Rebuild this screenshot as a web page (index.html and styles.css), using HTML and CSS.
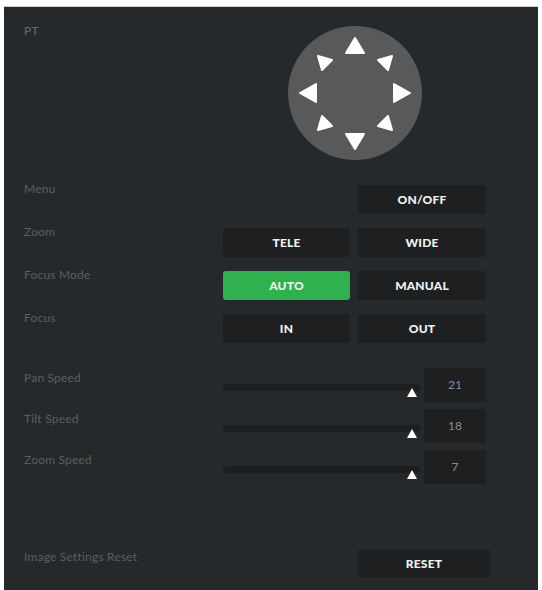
FILE: index.html
```html
<!DOCTYPE html>
<html lang="en">
<head>
    <meta charset="UTF-8">
    <meta name="viewport" content="width=device-width, initial-scale=1.0">
    <title>Camera Control</title>
    <link rel="stylesheet" href="styles.css">
</head>
<body>
    <div class="panel">
        <div class="row row-pt">
            <span class="label">PT</span>
            <div class="pad">
                <svg width="134" height="134" viewBox="0 0 134 134">
                    <circle cx="67" cy="67" r="67" fill="#58595b"/>
                    <g fill="#fff" stroke="#fff" stroke-width="2" stroke-linejoin="round">
                        <!-- up / down / left / right -->
                        <polygon points="67,12 58,27 76,27"/>
                        <polygon points="67,123 58,108 76,108"/>
                        <polygon points="12,67 28,58 28,76"/>
                        <polygon points="122,67 106,58 106,76"/>
                        <!-- diagonals -->
                        <polygon points="30,30 44,34 34,44"/>
                        <polygon points="104,30 90,34 100,44"/>
                        <polygon points="30,104 34,90 44,100"/>
                        <polygon points="104,104 100,90 90,100"/>
                    </g>
                </svg>
            </div>
        </div>

        <div class="row row-btn first-btn">
            <span class="label">Menu</span>
            <button class="btn col-right">ON/OFF</button>
        </div>
        <div class="row row-btn">
            <span class="label">Zoom</span>
            <button class="btn">TELE</button>
            <button class="btn">WIDE</button>
        </div>
        <div class="row row-btn">
            <span class="label">Focus Mode</span>
            <button class="btn active">AUTO</button>
            <button class="btn">MANUAL</button>
        </div>
        <div class="row row-btn">
            <span class="label">Focus</span>
            <button class="btn">IN</button>
            <button class="btn">OUT</button>
        </div>

        <div class="row row-slider first-slider">
            <span class="label">Pan Speed</span>
            <div class="slider"><div class="track"></div><span class="thumb"></span></div>
            <div class="value">21</div>
        </div>
        <div class="row row-slider">
            <span class="label">Tilt Speed</span>
            <div class="slider"><div class="track"></div><span class="thumb"></span></div>
            <div class="value">18</div>
        </div>
        <div class="row row-slider">
            <span class="label">Zoom Speed</span>
            <div class="slider"><div class="track"></div><span class="thumb"></span></div>
            <div class="value">7</div>
        </div>

        <div class="row row-reset">
            <span class="label">Image Settings Reset</span>
            <button class="btn col-right">RESET</button>
        </div>
    </div>
</body>
</html>
```

FILE: styles.css
```css
body {
    margin: 0;
    background-color: #fff;
    font-family: Lato, "Open Sans", sans-serif;
}
.panel {
    margin: 6px 4px 0;
    height: 584px;
    box-sizing: border-box;
    padding: 19px 0 0 20px;
    background-color: #26292c;
    border-top: 1px solid #c9cacb;
    display: flex;
    flex-direction: column;
}
.row {
    display: grid;
    grid-template-columns: 191px 127px 128px;
    column-gap: 8px;
    align-items: start;
}
.label {
    font-size: 12px;
    line-height: 14px;
    color: #5a5e61;
    letter-spacing: 0.2px;
}
.row-pt .label {
    margin-top: -2px;
    color: #686b6e;
}
.pad {
    grid-column: 2 / 4;
    justify-self: center;
    height: 134px;
}
.pad svg {
    display: block;
}

/* buttons */
.btn {
    height: 29px;
    padding: 0;
    border: none;
    border-radius: 3px;
    background-color: #1d1f21;
    color: #f2f2f2;
    font-family: Lato, "Open Sans", sans-serif;
    font-size: 12px;
    font-weight: 900;
    letter-spacing: 0.2px;
    cursor: pointer;
}
.btn.active {
    background-color: #2fb24e;
}
.col-right {
    grid-column: 3;
}
.row-btn {
    margin-top: 14px;
}
.row-btn.first-btn {
    margin-top: 25px;
}
.row-btn .label {
    margin-top: -3px;
}

/* speed sliders */
.row-slider {
    grid-template-columns: 195px 197px 62px;
    column-gap: 4px;
    margin-top: 7px;
}
.row-slider.first-slider {
    margin-top: 25px;
}
.row-slider .label {
    margin-top: 3px;
}
.slider {
    position: relative;
    height: 34px;
}
.track {
    margin-top: 16px;
    height: 7px;
    border-radius: 3px;
    background-color: #1c1e20;
}
.thumb {
    position: absolute;
    right: 3px;
    top: 20px;
    width: 0;
    height: 0;
    border-left: 5.5px solid transparent;
    border-right: 5.5px solid transparent;
    border-bottom: 9px solid #fff;
}
.value {
    height: 34px;
    line-height: 34px;
    text-align: center;
    background-color: #1d1f21;
    color: #8a8d90;
    font-size: 12px;
}

/* reset */
.row-reset {
    grid-template-columns: 191px 127px 132px;
    margin-top: 65px;
}
.row-reset .btn {
    height: 28px;
}
.row-reset .label {
    margin-top: 1px;
}
```
